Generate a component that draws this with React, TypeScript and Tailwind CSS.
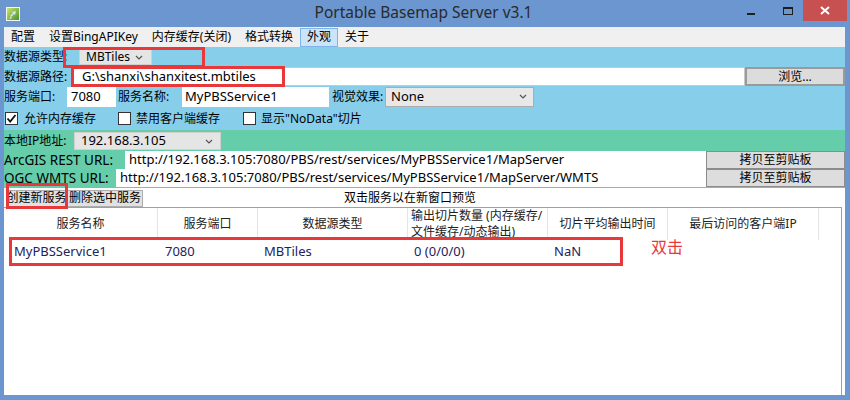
import React from 'react';

const ui = "font-['Noto_Sans','Noto_Sans_CJK_SC',sans-serif]";

const Chevron = () => (
  <svg width="8" height="5" viewBox="0 0 8 5" className="shrink-0">
    <path d="M1 1 L4 4 L7 1" fill="none" stroke="#555" strokeWidth="1.2" />
  </svg>
);

const CheckBox = ({ checked }: { checked?: boolean }) => (
  <div className="w-[13px] h-[13px] bg-white border border-[#333] flex items-center justify-center shrink-0">
    {checked && (
      <svg width="11" height="11" viewBox="0 0 11 11">
        <path d="M1.5 5.5 L4.2 8.5 L9.5 2" fill="none" stroke="#111" strokeWidth="1.8" />
      </svg>
    )}
  </div>
);

const AppIcon = () => (
  <svg width="14" height="14" viewBox="0 0 14 14">
    <defs>
      <linearGradient id="ig" x1="0" y1="0" x2="1" y2="1">
        <stop offset="0" stopColor="#d7e86a" />
        <stop offset="1" stopColor="#3f8f2c" />
      </linearGradient>
    </defs>
    <rect x="0.5" y="0.5" width="13" height="13" fill="url(#ig)" stroke="#f4f4f4" />
    <path d="M4 9 L7 6 L6 5 L10 4 L9 8 L8 7 L5 10 Z" fill="#cfe9f7" />
    <path d="M3 12 L5 10 L6 11 Z" fill="#ffffff" />
  </svg>
);

const headers = [
  { w: 'w-[154px]', t: '服务名称' },
  { w: 'w-[100px]', t: '服务端口' },
  { w: 'w-[150px]', t: '数据源类型' },
  { w: 'w-[140px]', t: '' },
  { w: 'w-[120px]', t: '切片平均输出时间' },
  { w: 'w-[151px]', t: '最后访问的客户端IP' },
];

const App: React.FC = () => {
  return (
    <div className={`relative w-[850px] h-[400px] bg-[#6b96cf] flex flex-col ${ui} text-black overflow-hidden`}>
      {/* title bar */}
      <div className="h-[27px] flex items-center shrink-0">
        <div className="pl-[6px] pt-[1px]">
          <AppIcon />
        </div>
        <div className="flex-1 text-center text-[15.5px] text-[#2a2a2a] pl-[90px] leading-none pb-[2px]">
          Portable Basemap Server v3.1
        </div>
        <div className="flex items-start self-start h-[21px]">
          <div className="w-[28px] h-[21px] flex items-center justify-center mr-[10px]">
            <div className="w-[8px] h-[2px] bg-[#1e1e1e] mt-[6px]" />
          </div>
          <div className="w-[26px] h-[21px] flex items-center justify-center mr-[2px]">
            <div className="w-[10px] h-[8px] border border-[#1e1e1e] border-t-2" />
          </div>
          <div className="w-[44px] h-[21px] bg-[#c75050] flex items-center justify-center mr-[3px]">
            <svg width="10" height="9" viewBox="0 0 10 9">
              <path d="M1 1 L9 8 M9 1 L1 8" stroke="#fff" strokeWidth="2" />
            </svg>
          </div>
        </div>
      </div>

      {/* client area */}
      <div className="flex-1 ml-[4px] mr-[5px] mb-[5px] flex flex-col bg-white">
        {/* menu */}
        <div className="h-[20px] bg-[#f0f0f0] flex items-center text-[12px] shrink-0">
          <span className="ml-[7px]">配置</span>
          <span className="ml-[14px]">设置BingAPIKey</span>
          <span className="ml-[14px]">内存缓存(关闭)</span>
          <span className="ml-[14px]">格式转换</span>
          <span className="ml-[7px] h-[19px] px-[6px] bg-[#cce4f7] border border-[#7eb4ea] flex items-center">外观</span>
          <span className="ml-[7px]">关于</span>
        </div>

        {/* blue panel */}
        <div className="bg-[#87ceeb] h-[83px] shrink-0 flex flex-col text-[12px]">
          <div className="h-[20px] flex items-center">
            <span className="w-[75px] shrink-0">数据源类型:</span>
            <div className="w-[73px] shrink-0 h-[16px] bg-[#e5e5e5] border border-[#d0d0d0] flex items-center justify-between pl-[6px] pr-[8px] text-[12px]">
              <span>MBTiles</span>
              <Chevron />
            </div>
          </div>
          <div className="h-[19px] flex items-stretch">
            <span className="w-[68px] flex items-center">数据源路径:</span>
            <div className="flex-1 bg-white border border-[#c8c8c8] flex items-center pl-[9px] text-[13px]">
              G:\shanxi\shanxitest.mbtiles
            </div>
            <div className="w-[100px] bg-[#dcdcdc] border-2 border-[#9a9a9a] flex items-center justify-center text-[12px]">
              浏览...
            </div>
          </div>
          <div className="h-[21px] flex items-center">
            <span className="w-[63px]">服务端口:</span>
            <div className="w-[49px] h-[20px] bg-white flex items-center pl-[4px] text-[13px]">7080</div>
            <span className="w-[66px] pl-[2px]">服务名称:</span>
            <div className="w-[147px] h-[20px] bg-white flex items-center pl-[3px] text-[13px]">MyPBSService1</div>
            <span className="w-[56px] pl-[3px]">视觉效果:</span>
            <div className="w-[149px] h-[20px] bg-[#e8e8e8] border border-[#acacac] flex items-center justify-between pl-[5px] pr-[6px] text-[13px]">
              <span>None</span>
              <Chevron />
            </div>
          </div>
          <div className="h-[21px] flex items-center mt-[1px]">
            <div className="ml-[1px]"><CheckBox checked /></div>
            <span className="ml-[6px]">允许内存缓存</span>
            <div className="ml-[22px]"><CheckBox /></div>
            <span className="ml-[5px]">禁用客户端缓存</span>
            <div className="ml-[23px]"><CheckBox /></div>
            <span className="ml-[5px]">显示"NoData"切片</span>
          </div>
        </div>

        {/* green panel */}
        <div className="bg-[#66cdaa] h-[58px] shrink-0 flex flex-col text-[12px] pt-[1px]">
          <div className="h-[20px] flex items-center">
            <span className="w-[70px]">本地IP地址:</span>
            <div className="w-[147px] h-[18px] bg-[#e5e5e5] border border-[#d0d0d0] flex items-center justify-between pl-[6px] pr-[7px] text-[13px]">
              <span>192.168.3.105</span>
              <Chevron />
            </div>
          </div>
          <div className="h-[18px] flex items-stretch">
            <span className="w-[121px] flex items-center text-[13.5px]">ArcGIS REST URL:</span>
            <div className="flex-1 bg-white flex items-center pl-[4px] text-[13px] whitespace-nowrap overflow-hidden">
              http://192.168.3.105:7080/PBS/rest/services/MyPBSService1/MapServer
            </div>
            <div className="w-[139px] bg-[#dddddd] border border-[#8c8c8c] flex items-center justify-center">
              拷贝至剪贴板
            </div>
          </div>
          <div className="h-[18px] flex items-stretch">
            <span className="w-[112px] flex items-center text-[13.5px]">OGC WMTS URL:</span>
            <div className="flex-1 bg-white flex items-center pl-[4px] text-[13px] whitespace-nowrap overflow-hidden">
              http://192.168.3.105:7080/PBS/rest/services/MyPBSService1/MapServer/WMTS
            </div>
            <div className="w-[139px] bg-[#dddddd] border border-[#8c8c8c] flex items-center justify-center">
              拷贝至剪贴板
            </div>
          </div>
        </div>

        {/* button row */}
        <div className="h-[19px] flex items-center text-[12px] shrink-0 pt-[1px]">
          <div className="ml-[2px] w-[61px] h-[17px] bg-[#e1e1e1] border border-[#adadad] overflow-hidden flex items-center justify-center whitespace-nowrap">
            创建新服务
          </div>
          <div className="w-[76px] h-[17px] bg-[#e1e1e1] border border-[#adadad] flex items-center justify-center whitespace-nowrap">
            删除选中服务
          </div>
          <span className="ml-[201px]">双击服务以在新窗口预览</span>
        </div>

        {/* list view */}
        <div className="flex-1 border-t border-[#a0a0a0] mr-[3px] border-r border-r-[#a0a0a0] flex flex-col text-[12px]">
          <div className="h-[32px] flex shrink-0">
            {headers.map((h, i) =>
              i === 3 ? (
                <div key={i} className={`${h.w} h-[32px] border-r border-[#e5e5e5] overflow-hidden pl-[3px] leading-[16px] text-[#222]`}>
                  <div className="whitespace-nowrap h-[16px]">输出切片数量 (内存缓存/</div>
                  <div className="whitespace-nowrap h-[16px]">文件缓存/动态输出)</div>
                </div>
              ) : (
                <div key={i} className={`${h.w} border-r border-[#e5e5e5] flex items-center justify-center text-[#222]`}>
                  {h.t}
                </div>
              )
            )}
            <div className="flex-1" />
          </div>
          <div className="h-[20px] mt-[2px] flex items-center text-[13px] text-[#1c2360]">
            <span className="w-[154px] pl-[10px]">MyPBSService1</span>
            <span className="w-[100px] pl-[7px]">7080</span>
            <span className="w-[150px] pl-[6px]">MBTiles</span>
            <span className="w-[140px] pl-[6px]">0 (0/0/0)</span>
            <span className="w-[120px] pl-[6px]">NaN</span>
          </div>
        </div>
      </div>

      {/* annotations */}
      <div className="absolute left-[63px] top-[47px] w-[142px] h-[21px] border-[3px] border-[#e8383a]" />
      <div className="absolute left-[71px] top-[66px] w-[214px] h-[21px] border-[3px] border-[#e8383a]" />
      <div className="absolute left-[6px] top-[183px] w-[62px] h-[26px] border-[3px] border-[#e8383a]" />
      <div className="absolute left-[9px] top-[237px] w-[614px] h-[29px] border-[3px] border-[#e8383a]" />
      <div className="absolute left-[651px] top-[235px] text-[16px] text-[#e8383a]">双击</div>
    </div>
  );
};

export default App;
